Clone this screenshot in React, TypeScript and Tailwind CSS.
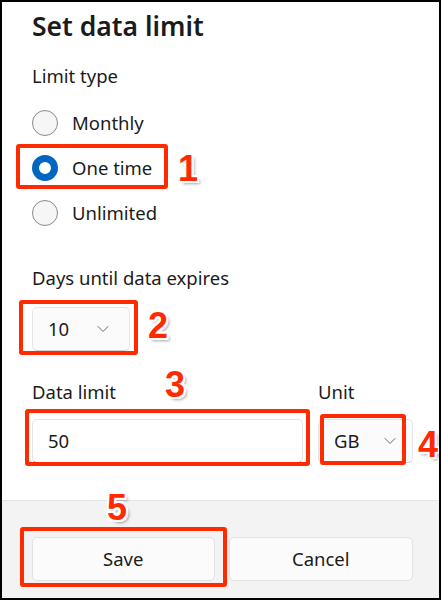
import { ChevronDown } from 'lucide-react'

const font = { fontFamily: '"Noto Sans", "Open Sans", sans-serif' }

function Badge({ n, className }: { n: string; className: string }) {
  return (
    <span
      className={`absolute font-bold leading-none text-[#ff2a00] text-[36px] [text-shadow:-2px_-2px_0_#fff,2px_-2px_0_#fff,-2px_2px_0_#fff,2px_2px_0_#fff,0_-2px_0_#fff,0_2px_0_#fff,-2px_0_0_#fff,2px_0_0_#fff,3px_3px_3px_rgba(0,0,0,0.35)] ${className}`}
      style={{ fontFamily: '"Liberation Sans", Arial, sans-serif' }}
    >
      {n}
    </span>
  )
}

function Radio({ label, checked }: { label: string; checked?: boolean }) {
  return (
    <div className="flex items-center h-[45px] gap-[14px]">
      {checked ? (
        <span className="w-[26px] h-[26px] rounded-full border-[7px] border-[#0067c0] bg-white" />
      ) : (
        <span className="w-[26px] h-[26px] rounded-full border-[1.5px] border-[#8a8a8a] bg-[#f6f6f6]" />
      )}
      <span className="text-[18.5px] text-[#1b1b1b]">{label}</span>
    </div>
  )
}

export default function App() {
  return (
    <div
      className="relative w-[441px] h-[600px] border-2 border-black bg-white flex flex-col overflow-hidden"
      style={font}
    >
      <div className="flex-1 pl-[30px] pr-[26px] pt-[4px]">
        <h1 className="text-[26.5px] leading-[40px] font-semibold text-[#1b1b1b]">Set data limit</h1>

        <p className="mt-[18px] text-[18.5px] leading-[24px] text-[#1b1b1b]">Limit type</p>

        <div className="mt-[12px] flex flex-col">
          <Radio label="Monthly" />
          <div className="relative">
            <Radio label="One time" checked />
            <div className="absolute left-[-16px] top-[-1px] w-[152px] h-[45px] border-4 border-[#ff2a00] rounded-[3px]" />
            <Badge n="1" className="left-[146px] top-[6px]" />
          </div>
          <Radio label="Unlimited" />
        </div>

        <p className="mt-[31px] text-[18.5px] leading-[24px] text-[#1b1b1b]">Days until data expires</p>

        <div className="relative mt-[17px] w-[98px]">
          <div className="h-[44px] flex items-center justify-between pl-[15px] pr-[16px] rounded-[5px] border border-[#e5e5e5] border-b-[#d0d0d0] bg-[#fbfbfb]">
            <span className="text-[18.5px] text-[#1b1b1b]">10</span>
            <ChevronDown size={20} strokeWidth={1.1} className="text-[#5c5c5c]" />
          </div>
          <div className="absolute left-[-13px] top-[-7px] right-[-8px] bottom-[-4px] border-4 border-[#ff2a00] rounded-[3px]" />
          <Badge n="2" className="left-[116px] top-[1px]" />
        </div>

        <div className="mt-[29px] flex gap-[15px]">
          <div className="relative w-[271px]">
            <p className="text-[18.5px] leading-[24px] text-[#1b1b1b]">Data limit</p>
            <div className="mt-[15px] h-[44px] flex items-center px-[15px] rounded-[5px] border border-[#e5e5e5] border-b-[#8a8a8a] bg-white">
              <span className="text-[18.5px] text-[#1b1b1b]">50</span>
            </div>
            <div className="absolute left-[-7px] top-[29px] right-[-7px] bottom-[-3px] border-4 border-[#ff2a00] rounded-[3px]" />
            <Badge n="3" className="left-[133px] top-[-13px]" />
          </div>
          <div className="relative w-[95px]">
            <p className="text-[18.5px] leading-[24px] text-[#1b1b1b]">Unit</p>
            <div className="mt-[15px] h-[44px] flex items-center justify-between pl-[15px] pr-[12px] rounded-[5px] border border-[#e5e5e5] border-b-[#d0d0d0] bg-[#fbfbfb]">
              <span className="text-[18.5px] text-[#1b1b1b]">GB</span>
              <ChevronDown size={20} strokeWidth={1.1} className="text-[#5c5c5c]" />
            </div>
            <div className="absolute left-[2px] top-[34px] w-[86px] h-[51px] border-4 border-[#ff2a00] rounded-[3px]" />
            <Badge n="4" className="left-[100px] top-[47px]" />
          </div>
        </div>
      </div>

      <div className="relative h-[98px] bg-[#f3f3f3] border-t border-[#e5e5e5] flex items-start gap-[14px] pl-[30px] pr-[26px] pt-[36px]">
        <div className="relative flex-1">
          <button className="w-full h-[44px] rounded-[5px] border border-[#e2e2e2] bg-[#fbfbfb] text-[18.5px] text-[#1b1b1b]">
            Save
          </button>
          <div className="absolute left-[-12px] top-[-10px] right-[-12px] bottom-[-6px] border-4 border-[#ff2a00] rounded-[3px]" />
          <Badge n="5" className="left-[75px] top-[-47px]" />
        </div>
        <button className="flex-1 h-[44px] rounded-[5px] border border-[#e2e2e2] bg-[#fbfbfb] text-[18.5px] text-[#1b1b1b]">
          Cancel
        </button>
      </div>
    </div>
  )
}
